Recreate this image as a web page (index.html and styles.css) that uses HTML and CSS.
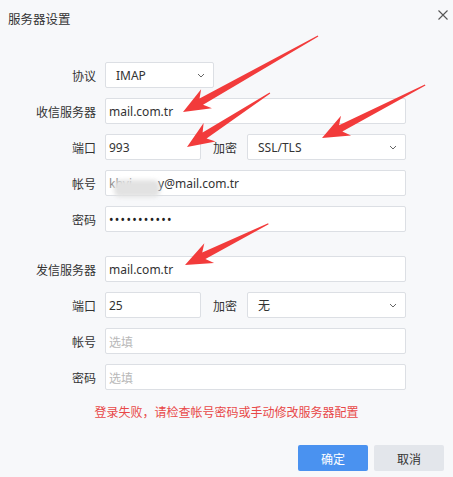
FILE: index.html
```html
<!DOCTYPE html>
<html lang="zh-CN">
<head>
<meta charset="utf-8">
<title>服务器设置</title>
<link rel="stylesheet" href="styles.css">
</head>
<body>
<div class="dialog">
  <div class="header">
    <span class="title">服务器设置</span>
    <span class="close"><svg width="10" height="10" viewBox="0 0 10 10"><path d="M0.5 0.5 L9.5 9.5 M9.5 0.5 L0.5 9.5" stroke="#555" stroke-width="1.1" fill="none"/></svg></span>
  </div>

  <div class="form">
    <div class="section">
      <div class="row">
        <span class="label">协议</span>
        <div class="select proto"><span>IMAP</span><svg class="chev" width="8" height="5" viewBox="0 0 8 5"><path d="M1 1 L4 4 L7 1" stroke="#666" stroke-width="1" fill="none"/></svg></div>
      </div>
      <div class="row">
        <span class="label">收信服务器</span>
        <div class="field wide">mail.com.tr</div>
      </div>
      <div class="row">
        <span class="label">端口</span>
        <div class="field port">993</div>
        <span class="label2">加密</span>
        <div class="select grow"><span>SSL/TLS</span><svg class="chev" width="8" height="5" viewBox="0 0 8 5"><path d="M1 1 L4 4 L7 1" stroke="#666" stroke-width="1" fill="none"/></svg></div>
      </div>
      <div class="row">
        <span class="label">帐号</span>
        <div class="field wide masked"><span class="faint">khvi</span><span class="gap"></span><span>y@mail.com.tr</span><span class="blob"></span></div>
      </div>
      <div class="row">
        <span class="label">密码</span>
        <div class="field wide dots">•••••••••••</div>
      </div>
    </div>

    <div class="section">
      <div class="row">
        <span class="label">发信服务器</span>
        <div class="field wide">mail.com.tr</div>
      </div>
      <div class="row">
        <span class="label">端口</span>
        <div class="field port">25</div>
        <span class="label2">加密</span>
        <div class="select grow"><span>无</span><svg class="chev" width="8" height="5" viewBox="0 0 8 5"><path d="M1 1 L4 4 L7 1" stroke="#666" stroke-width="1" fill="none"/></svg></div>
      </div>
      <div class="row">
        <span class="label">帐号</span>
        <div class="field wide placeholder">选填</div>
      </div>
      <div class="row">
        <span class="label">密码</span>
        <div class="field wide placeholder">选填</div>
      </div>
    </div>
  </div>

  <p class="error">登录失败，请检查帐号密码或手动修改服务器配置</p>

  <div class="footer">
    <button class="btn primary">确定</button>
    <button class="btn">取消</button>
  </div>

  <svg class="arrows" width="453" height="477" viewBox="0 0 453 477">
    <g fill="#f23b3b">
      <path transform="translate(183,112) rotate(150.6)" d="M0 0 L-27 -11 L-21 -3.6 L-155 -0.6 L-155 0.6 L-21 3.6 L-27 11 Z"/>
      <path transform="translate(187,147) rotate(146.9)" d="M0 0 L-27 -11 L-21 -3.6 L-99 -0.6 L-99 0.6 L-21 3.6 L-27 11 Z"/>
      <path transform="translate(322,138) rotate(152.8)" d="M0 0 L-27 -11 L-21 -3.6 L-116 -0.6 L-116 0.6 L-21 3.6 L-27 11 Z"/>
      <path transform="translate(185,265) rotate(153.7)" d="M0 0 L-27 -11 L-21 -3.6 L-93 -0.6 L-93 0.6 L-21 3.6 L-27 11 Z"/>
    </g>
  </svg>
</div>
</body>
</html>
```
FILE: styles.css
```css
html, body {
  margin: 0;
  padding: 0;
}
body {
  background: #f7f8fa;
  font-family: "Noto Sans", "Noto Sans CJK SC", sans-serif;
  font-size: 12px;
  color: #333;
}
.dialog {
  position: relative;
  width: 453px;
  height: 477px;
  box-sizing: border-box;
  display: flex;
  flex-direction: column;
}
.header {
  height: 36px;
  display: flex;
  align-items: center;
  justify-content: space-between;
  padding: 0 5px 0 8px;
}
.title {
  font-family: "Noto Sans CJK SC", sans-serif;
  font-size: 12.5px;
  color: #333;
}
.close {
  display: flex;
  align-self: flex-start;
  margin-top: 10px;
}
.form {
  padding-top: 26px;
  display: flex;
  flex-direction: column;
  gap: 24px;
}
.section {
  display: flex;
  flex-direction: column;
  gap: 10px;
}
.row {
  display: flex;
  align-items: center;
  height: 26px;
}
.label {
  width: 96px;
  text-align: right;
  margin-right: 9px;
  font-family: "Noto Sans CJK SC", sans-serif;
  font-size: 12px;
  color: #333;
}
.label2 {
  margin: 0 10px 0 12px;
  font-family: "Noto Sans CJK SC", sans-serif;
  font-size: 12px;
  color: #333;
}
.field, .select {
  height: 26px;
  box-sizing: border-box;
  border: 1px solid #dcdfe4;
  border-radius: 2px;
  background: #fff;
  display: flex;
  align-items: center;
  font-size: 12px;
  color: #333;
  white-space: nowrap;
}
.field {
  padding: 0 3px;
}
.wide {
  width: 301px;
}
.port {
  width: 96px;
}
.select {
  padding: 0 8px 0 10px;
  justify-content: space-between;
}
.proto {
  width: 109px;
}
.grow {
  width: 159px;
}
.chev {
  display: block;
}
.placeholder {
  color: #b8b8b8;
  font-family: "Noto Sans CJK SC", sans-serif;
}
.dots {
  letter-spacing: 1.3px;
  font-size: 12px;
  color: #222;
}
.masked {
  position: relative;
}
.faint {
  color: #888;
}
.gap {
  display: inline-block;
  width: 26px;
}
.blob {
  position: absolute;
  left: 8px;
  top: 9px;
  width: 46px;
  height: 17px;
  background: #e2e2e2;
  border-radius: 6px;
  filter: blur(2px);
}
.error {
  margin: 13px 0 0;
  text-align: center;
  font-family: "Noto Sans CJK SC", sans-serif;
  font-size: 12px;
  color: #e84848;
  line-height: 18px;
}
.footer {
  display: flex;
  justify-content: flex-end;
  gap: 6px;
  padding-right: 9px;
  margin-top: 24px;
}
.btn {
  width: 70px;
  height: 26px;
  border: none;
  border-radius: 2px;
  background: #e3e6eb;
  color: #333;
  font-family: "Noto Sans CJK SC", sans-serif;
  font-size: 12px;
  padding: 0;
}
.btn.primary {
  background: #4a92f0;
  color: #fff;
}
.arrows {
  position: absolute;
  left: 0;
  top: 0;
  pointer-events: none;
}
```
